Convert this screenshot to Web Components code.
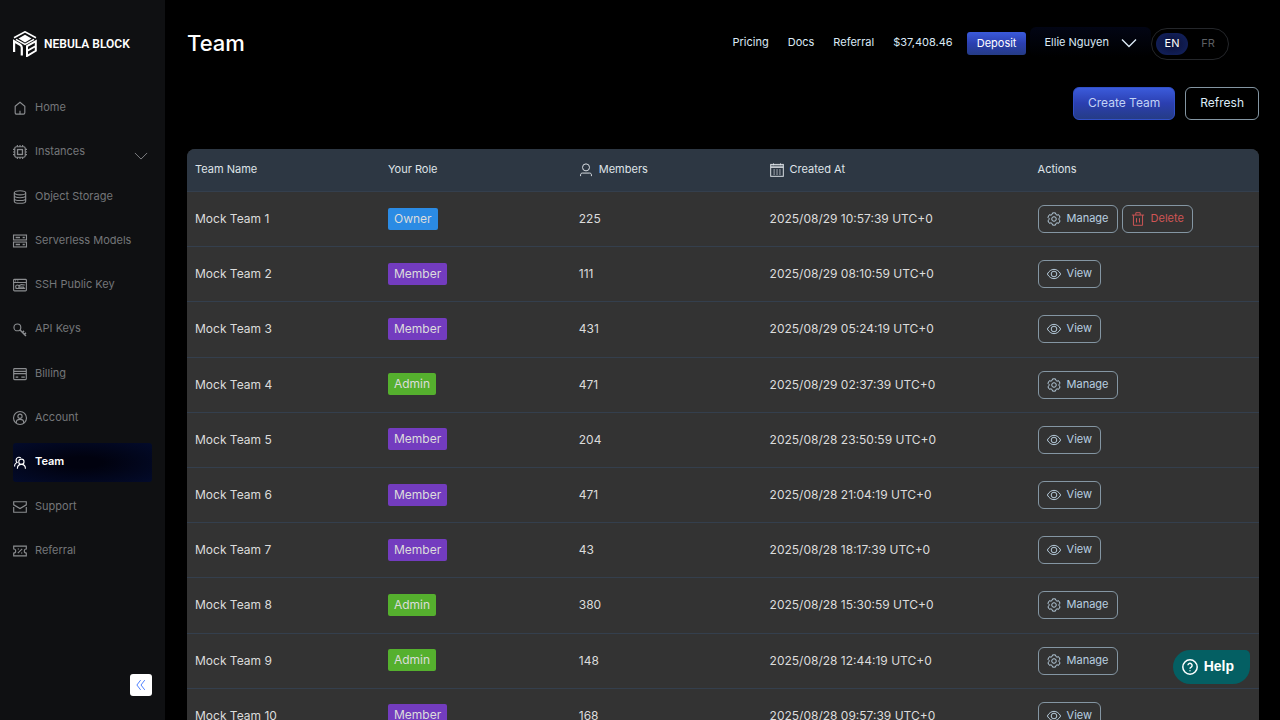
<!DOCTYPE html>
<html lang="en">
<head>
<meta charset="utf-8">
<meta name="viewport" content="width=device-width, initial-scale=1">
<title>Team - Nebula Block</title>
<style>
html { scrollbar-width: none; background: #000; }
body { margin: 0; font-family: Inter, sans-serif; font-size: 13px; color: #e0e0e0; }
</style>
</head>
<body>
<nb-app></nb-app>
<script>
const ICONS = {
  home: '<path d="M2.500 6 8 1.500 13.500 6v7.500a1.500 1.500 0 0 1-1.500 1.500H4a1.500 1.500 0 0 1-1.500-1.500z"/><path d="M8 11v4"/>',
  chip: '<rect x="2" y="2" width="12" height="12" rx="2"/><rect x="5.200" y="5.200" width="5.600" height="5.600" stroke-width="1.500"/><path d="M5 0v2M8 0v2M11 0v2M5 14v2M8 14v2M11 14v2M0 5h2M0 8h2M0 11h2M14 5h2M14 8h2M14 11h2"/>',
  database: '<ellipse cx="8" cy="3.200" rx="6.500" ry="2.400"/><path d="M1.500 3.200v9.600c0 1.300 2.900 2.400 6.500 2.400s6.500-1.100 6.500-2.400V3.200M1.500 6.400c0 1.300 2.900 2.400 6.500 2.400s6.500-1.100 6.500-2.400M1.500 9.600C1.500 10.900 4.400 12 8 12s6.500-1.100 6.500-2.400"/>',
  server: '<rect x=".6" y="1.200" width="14.800" height="5.600"/><rect x=".6" y="9.200" width="14.800" height="5.600"/><path d="M3 4h5M3 12h5M11 4h2.500M11 12h2.500" stroke-width="1.600"/>',
  ssh: '<rect x=".7" y="1.500" width="14.600" height="13.200" rx="1"/><path d="M.7 5.200h14.600M2.500 3.300h1M5 3.300h1"/><circle cx="5" cy="10" r="2"/><path d="m6.500 9 3-1.500 4 .5M7 10.500h5l1 1.500H3"/>',
  key: '<circle cx="5" cy="5" r="3.900"/><path d="m7.800 7.800 7 7M10.800 10.800l1.800-1.800M13 13l1.800-1.800" stroke-width="1.700"/>',
  card: '<rect x=".8" y="1.800" width="14.400" height="12.600" rx="1"/><path d="M1 5h14M1 7.500h14M3 11.500h3M9.500 11.500h4"/>',
  account: '<circle cx="8" cy="8" r="7.400"/><circle cx="8" cy="6" r="2.400"/><path d="M3.800 13.700v-.9c0-2.300 1.800-3.300 4.200-3.300s4.200 1 4.200 3.300v.9"/>',
  team: '<circle cx="9.600" cy="6.600" r="3"/><path d="M5 14.500c0-3 1.900-4.900 4.600-4.900s4.600 1.900 4.600 4.900M9 2.200A3 3 0 1 0 4.800 7.500M1.800 12c0-2.500 1.200-4.300 3.500-4.600"/>',
  mail: '<path d="M.8 2h14.400v3.500L8 9.800.8 5.500zM.8 8v6h14.400V8"/>',
  ticket: '<path d="M.8 2.500h14.400v3.200a2.300 2.300 0 0 0 0 4.600v3.200H.8v-3.200a2.300 2.300 0 0 0 0-4.600zM10.500 5.500l-5 5"/><path d="M5.500 5.800h1M9.500 10.300h1" stroke-width="1.800"/>',
  user: '<circle cx="8" cy="5" r="4"/><path d="M1.800 15v-1.500c0-1.400 1-2 2.200-2h8c1.200 0 2.200.6 2.200 2V15"/>',
  calendar: '<rect x=".8" y="1.600" width="14.400" height="13.600"/><path d="M.8 5h14.400M.8 3.600h14.400M4 .5v2M12 .5v2"/><path d="M4 8h1.500M7.300 8h1.500M10.600 8h1.500M4 10.300h1.500M7.300 10.300h1.500M10.600 10.300h1.500M4 12.600h1.500M7.300 12.600h1.500M10.600 12.600h1.500"/>',
  gear: '<path d="M6.300 1h3.400l.5 1.900 1.200.7 1.900-.5L15 6l-1.400 1.400v1.300L15 10l-1.700 2.900-1.900-.5-1.200.7-.5 1.900H6.300l-.5-1.900-1.200-.7-1.900.5L1 10l1.400-1.300V7.400L1 6l1.700-2.900 1.900.5 1.200-.7z"/><circle cx="8" cy="8" r="2.600"/>',
  eye: '<path d="M.4 8C2.300 4.500 5 2.700 8 2.700s5.700 1.800 7.600 5.300c-1.900 3.500-4.600 5.300-7.600 5.300S2.300 11.500.4 8z"/><circle cx="8" cy="8" r="3.200"/>',
  trash: '<path d="M1 3.500h14M5.500 3.500V.8h5v2.700M2.800 3.500v11.700h10.400V3.500M6.300 7v5M9.700 7v5"/>',
  chevron: '<path d="m1 4.500 7 7 7-7"/>',
  collapse: '<path d="M7.500 1.500 2.500 8l5 6.500M13 1.500 8 8l5 6.500"/>',
  help: '<circle cx="8" cy="8" r="7.200"/><path d="M5.900 6.300a2.100 2.100 0 1 1 3.300 1.800C8.300 8.600 8 8.900 8 9.700M8 11.200v1.100" stroke-width="1.400"/>'
};

function define(name, markup, setup) {
  const template = document.createElement('template');
  customElements.define(name, class extends HTMLElement {
    constructor() {
      super();
      this.attachShadow({ mode: 'open' });
    }
    connectedCallback() {
      if (this.shadowRoot.childNodes.length) return;
      template.innerHTML = typeof markup === 'function' ? markup(this) : markup;
      this.shadowRoot.append(template.content.cloneNode(true));
      if (setup) setup(this);
    }
  });
}

define('nb-icon', el => `
<style>
:host { display: inline-flex; flex: none; width: var(--size, 14px); height: var(--size, 14px); }
svg { width: 100%; height: 100%; overflow: visible; fill: none; stroke: currentColor; stroke-width: var(--stroke, 1.3); }
</style>
<svg viewBox="0 0 16 16" aria-hidden="true">${ICONS[el.getAttribute('name')]}</svg>`);

define('nb-logo', `
<style>
:host { display: block; }
a { display: flex; align-items: center; gap: 7px; color: #fff; text-decoration: none; font: 600 12px/16px Roboto, sans-serif; white-space: nowrap; }
svg { width: 24px; height: 26px; flex: none; }
</style>
<a href="#home">
<svg viewBox="0 0 24 26" fill="none" stroke="#fff" stroke-width="2" aria-hidden="true">
<path d="M1 6.700 12 .8l11 5.900M3 8.400l9 5 9-5" stroke-width="1.600"/>
<path d="M12 3.800 18.500 7.600 12 11.400 5.500 7.600z" fill="#fff" stroke="none"/>
<path d="M1.100 21V10.200l6 3.600q1.700 1 1.700 3v7.700" stroke-width="2.200"/>
<path d="M14 25V15.200l8.800-5v9.600zM14 20l8.800-5"/>
</svg>
<span>NEBULA BLOCK</span></a>`);

define('nb-nav-item', el => `
<style>
:host { display: block; }
a { display: flex; align-items: center; gap: 8px; padding: 11px 4px 13px 0; border-radius: 3px; color: #747679; text-decoration: none; font-size: 11px; line-height: 1.3; }
a[aria-current] { color: #fff; font-weight: 600; background: radial-gradient(ellipse at center, #01020f 20%, #030b2b 100%); }
span { flex: 1; white-space: nowrap; }
nb-icon { margin: 1px 0 -1px; color: #8b8d90; }
a[aria-current] nb-icon { color: #fff; }
a .more { margin-bottom: -8px; --stroke: 1; }
</style>
<a href="#${el.getAttribute('icon')}" ${el.hasAttribute('active') ? 'aria-current="page"' : ''}>
<nb-icon name="${el.getAttribute('icon')}"></nb-icon><span><slot></slot></span>
${el.hasAttribute('expandable') ? '<nb-icon class="more" name="chevron"></nb-icon>' : ''}</a>`);

define('nb-sidebar', `
<style>
:host { display: flex; flex-direction: column; box-sizing: border-box; position: sticky; top: 0; height: 100vh; padding: 31px 13px 24px; background: #0f1012; }
nav { display: flex; flex-direction: column; gap: 6px; margin-top: 32px; }
button { margin-top: auto; align-self: flex-end; display: grid; place-items: center; width: 22px; height: 22px; padding: 0; border: 0; border-radius: 3px; background: #fff; color: #4a7dff; --size: 12px; }
</style>
<nb-logo></nb-logo>
<nav aria-label="Main">
<nb-nav-item icon="home">Home</nb-nav-item>
<nb-nav-item icon="chip" expandable>Instances</nb-nav-item>
<nb-nav-item icon="database">Object Storage</nb-nav-item>
<nb-nav-item icon="server">Serverless Models</nb-nav-item>
<nb-nav-item icon="ssh">SSH Public Key</nb-nav-item>
<nb-nav-item icon="key">API Keys</nb-nav-item>
<nb-nav-item icon="card">Billing</nb-nav-item>
<nb-nav-item icon="account">Account</nb-nav-item>
<nb-nav-item icon="team" active>Team</nb-nav-item>
<nb-nav-item icon="mail">Support</nb-nav-item>
<nb-nav-item icon="ticket">Referral</nb-nav-item>
</nav>
<button type="button" aria-label="Collapse sidebar"><nb-icon name="collapse"></nb-icon></button>`);

define('nb-topbar', `
<style>
:host { display: flex; align-items: center; justify-content: space-between; padding: 27px 30px 0 0; }
h1 { margin: 0; padding-bottom: 2px; font-size: 22px; line-height: 30px; font-weight: 500; color: #fff; }
.right { display: flex; align-items: center; font-size: 11px; line-height: 16px; color: #dbe9f5; }
nav { display: flex; gap: 19px; margin-right: 14px; padding-bottom: 4px; }
a { color: inherit; text-decoration: none; }
button { font: inherit; border: 0; padding: 0; color: inherit; background: none; }
.deposit { height: 23px; margin-bottom: 1px; padding: 0 10px 2px; border-radius: 3px; color: #fff; background: linear-gradient(#3b5bdb, #2b3fb0 50%, #253c86); }
.user { display: flex; align-items: center; gap: 12px; height: 30px; margin: 0 0 4px 4px; padding: 0 14px; border-radius: 6px; background: linear-gradient(#020514, #000); --size: 16px; --stroke: 1.4; }
.user nb-icon { margin-top: 2px; }
.lang { display: flex; align-items: center; box-sizing: border-box; height: 32px; padding: 0 4px; border: 1px solid #24262a; border-radius: 16px; color: #5c5f63; }
.lang button { width: 32px; height: 22px; padding-bottom: 2px; border-radius: 11px; }
.lang button + button { margin-left: 4px; }
.lang [aria-pressed=true] { color: #fff; background: radial-gradient(ellipse, #0b123b 10%, #142463 100%); }
</style>
<h1>Team</h1>
<div class="right">
<nav aria-label="Links"><a href="#pricing">Pricing</a><a href="#docs">Docs</a><a href="#referral">Referral</a><a href="#balance">$37,408.46</a></nav>
<button type="button" class="deposit">Deposit</button>
<button type="button" class="user"><span>Ellie Nguyen</span><nb-icon name="chevron"></nb-icon></button>
<div class="lang" role="group" aria-label="Language"><button type="button" aria-pressed="true">EN</button><button type="button" aria-pressed="false">FR</button></div>
</div>`);

define('nb-button', `
<style>
:host { display: block; }
button { height: 33px; padding: 0 14px 2px; border: 1px solid #8496a3; border-radius: 6px; background: none; color: #dcebf7; font: 400 12px/16px Inter, sans-serif; }
:host([primary]) button { border-color: #3150c8; color: #c2d3f5; background: linear-gradient(#3b5bdb, #2b3fb0 50%, #253c86); }
</style>
<button type="button"><slot></slot></button>`);

define('nb-role', `
<style>
:host { display: inline-block; padding: 0 6px; margin: -9px 0 -7px; border-radius: 2px; line-height: 22px; font-size: 12px; background: #733cbf; vertical-align: middle; }
:host([kind=Owner]) { background: #2b8be4; }
:host([kind=Admin]) { background: #55b02e; }
</style>
<slot></slot>`);

define('nb-action', el => `
<style>
:host { display: block; }
button { display: flex; align-items: center; gap: 6px; box-sizing: border-box; height: 28px; padding: 0 8px; border: 1px solid #8496a3; border-radius: 6px; background: none; color: #b9cfe0; font: 400 11px/16px Inter, sans-serif; --size: 14px; --stroke: 1.1; }
:host([danger]) button { color: #cf5555; }
span { padding-bottom: 2px; }
</style>
<button type="button"><nb-icon name="${el.getAttribute('icon')}"></nb-icon><span><slot></slot></span></button>`);

define('nb-team-table', `
<style>
:host { display: block; }
table { width: 100%; table-layout: fixed; border-spacing: 0; background: #333; border-radius: 8px; }
th, td { box-sizing: border-box; border-bottom: 1px solid #343f4d; text-align: left; white-space: nowrap; }
th { height: 43px; padding: 0 8px 2px; background: #2d3743; font-size: 11px; line-height: 16px; font-weight: 400; color: #dfe3e8; }
th:first-child { border-top-left-radius: 8px; }
th:last-child { border-top-right-radius: 8px; }
td { padding: 19px 8px; font-size: 12px; line-height: 1.35; color: #dcdcdc; }
td.actions { padding: 0 8px; }
.head { display: flex; align-items: center; gap: 6px; --size: 14px; --stroke: 1.1; }
.head nb-icon { margin: 1px 0 -1px; }
.group { display: flex; gap: 4px; }
</style>
<table>
<colgroup><col style="width:18%"><col style="width:17.8%"><col style="width:17.8%"><col style="width:25%"><col></colgroup>
<thead><tr><th scope="col">Team Name</th><th scope="col">Your Role</th>
<th scope="col"><div class="head"><nb-icon name="user"></nb-icon>Members</div></th>
<th scope="col"><div class="head"><nb-icon name="calendar"></nb-icon>Created At</div></th>
<th scope="col">Actions</th></tr></thead>
<tbody></tbody>
</table>`, el => {
  const teams = [
    ['Owner', 225, '2025/08/29 10:57:39'], ['Member', 111, '2025/08/29 08:10:59'],
    ['Member', 431, '2025/08/29 05:24:19'], ['Admin', 471, '2025/08/29 02:37:39'],
    ['Member', 204, '2025/08/28 23:50:59'], ['Member', 471, '2025/08/28 21:04:19'],
    ['Member', 43, '2025/08/28 18:17:39'], ['Admin', 380, '2025/08/28 15:30:59'],
    ['Admin', 148, '2025/08/28 12:44:19'], ['Member', 168, '2025/08/28 09:57:39']
  ];
  const view = '<nb-action icon="eye">View</nb-action>';
  const manage = '<nb-action icon="gear">Manage</nb-action>';
  const remove = '<nb-action icon="trash" danger>Delete</nb-action>';
  el.shadowRoot.querySelector('tbody').innerHTML = teams.map(([role, members, created], i) => `
    <tr><td>Mock Team ${i + 1}</td><td><nb-role kind="${role}">${role}</nb-role></td>
    <td>${members}</td><td>${created} UTC+0</td>
    <td class="actions"><div class="group">${role === 'Member' ? view : manage}${role === 'Owner' ? remove : ''}</div></td></tr>`).join('');
});

define('nb-help', `
<style>
:host { position: fixed; right: 30px; bottom: 36px; }
button { display: flex; align-items: center; gap: 6px; height: 34px; padding: 0 16px 0 9px; border: 0; border-radius: 17px 5px 17px 17px; background: #045f63; color: #fff; font: 700 14px/16px "Liberation Sans", sans-serif; --size: 16px; --stroke: 1.5; }
span { padding-bottom: 2px; }
</style>
<button type="button"><nb-icon name="help"></nb-icon><span>Help</span></button>`);

define('nb-app', `
<style>
:host { display: grid; grid-template-columns: 165px minmax(0, 1fr); min-height: 100vh; }
main { padding: 0 21px 24px 22px; }
.tools { display: flex; justify-content: flex-end; gap: 10px; margin: 26px 0 29px; }
</style>
<nb-sidebar></nb-sidebar>
<main>
<nb-topbar></nb-topbar>
<div class="tools"><nb-button primary>Create Team</nb-button><nb-button>Refresh</nb-button></div>
<nb-team-table></nb-team-table>
</main>
<nb-help></nb-help>`);
</script>
</body>
</html>
